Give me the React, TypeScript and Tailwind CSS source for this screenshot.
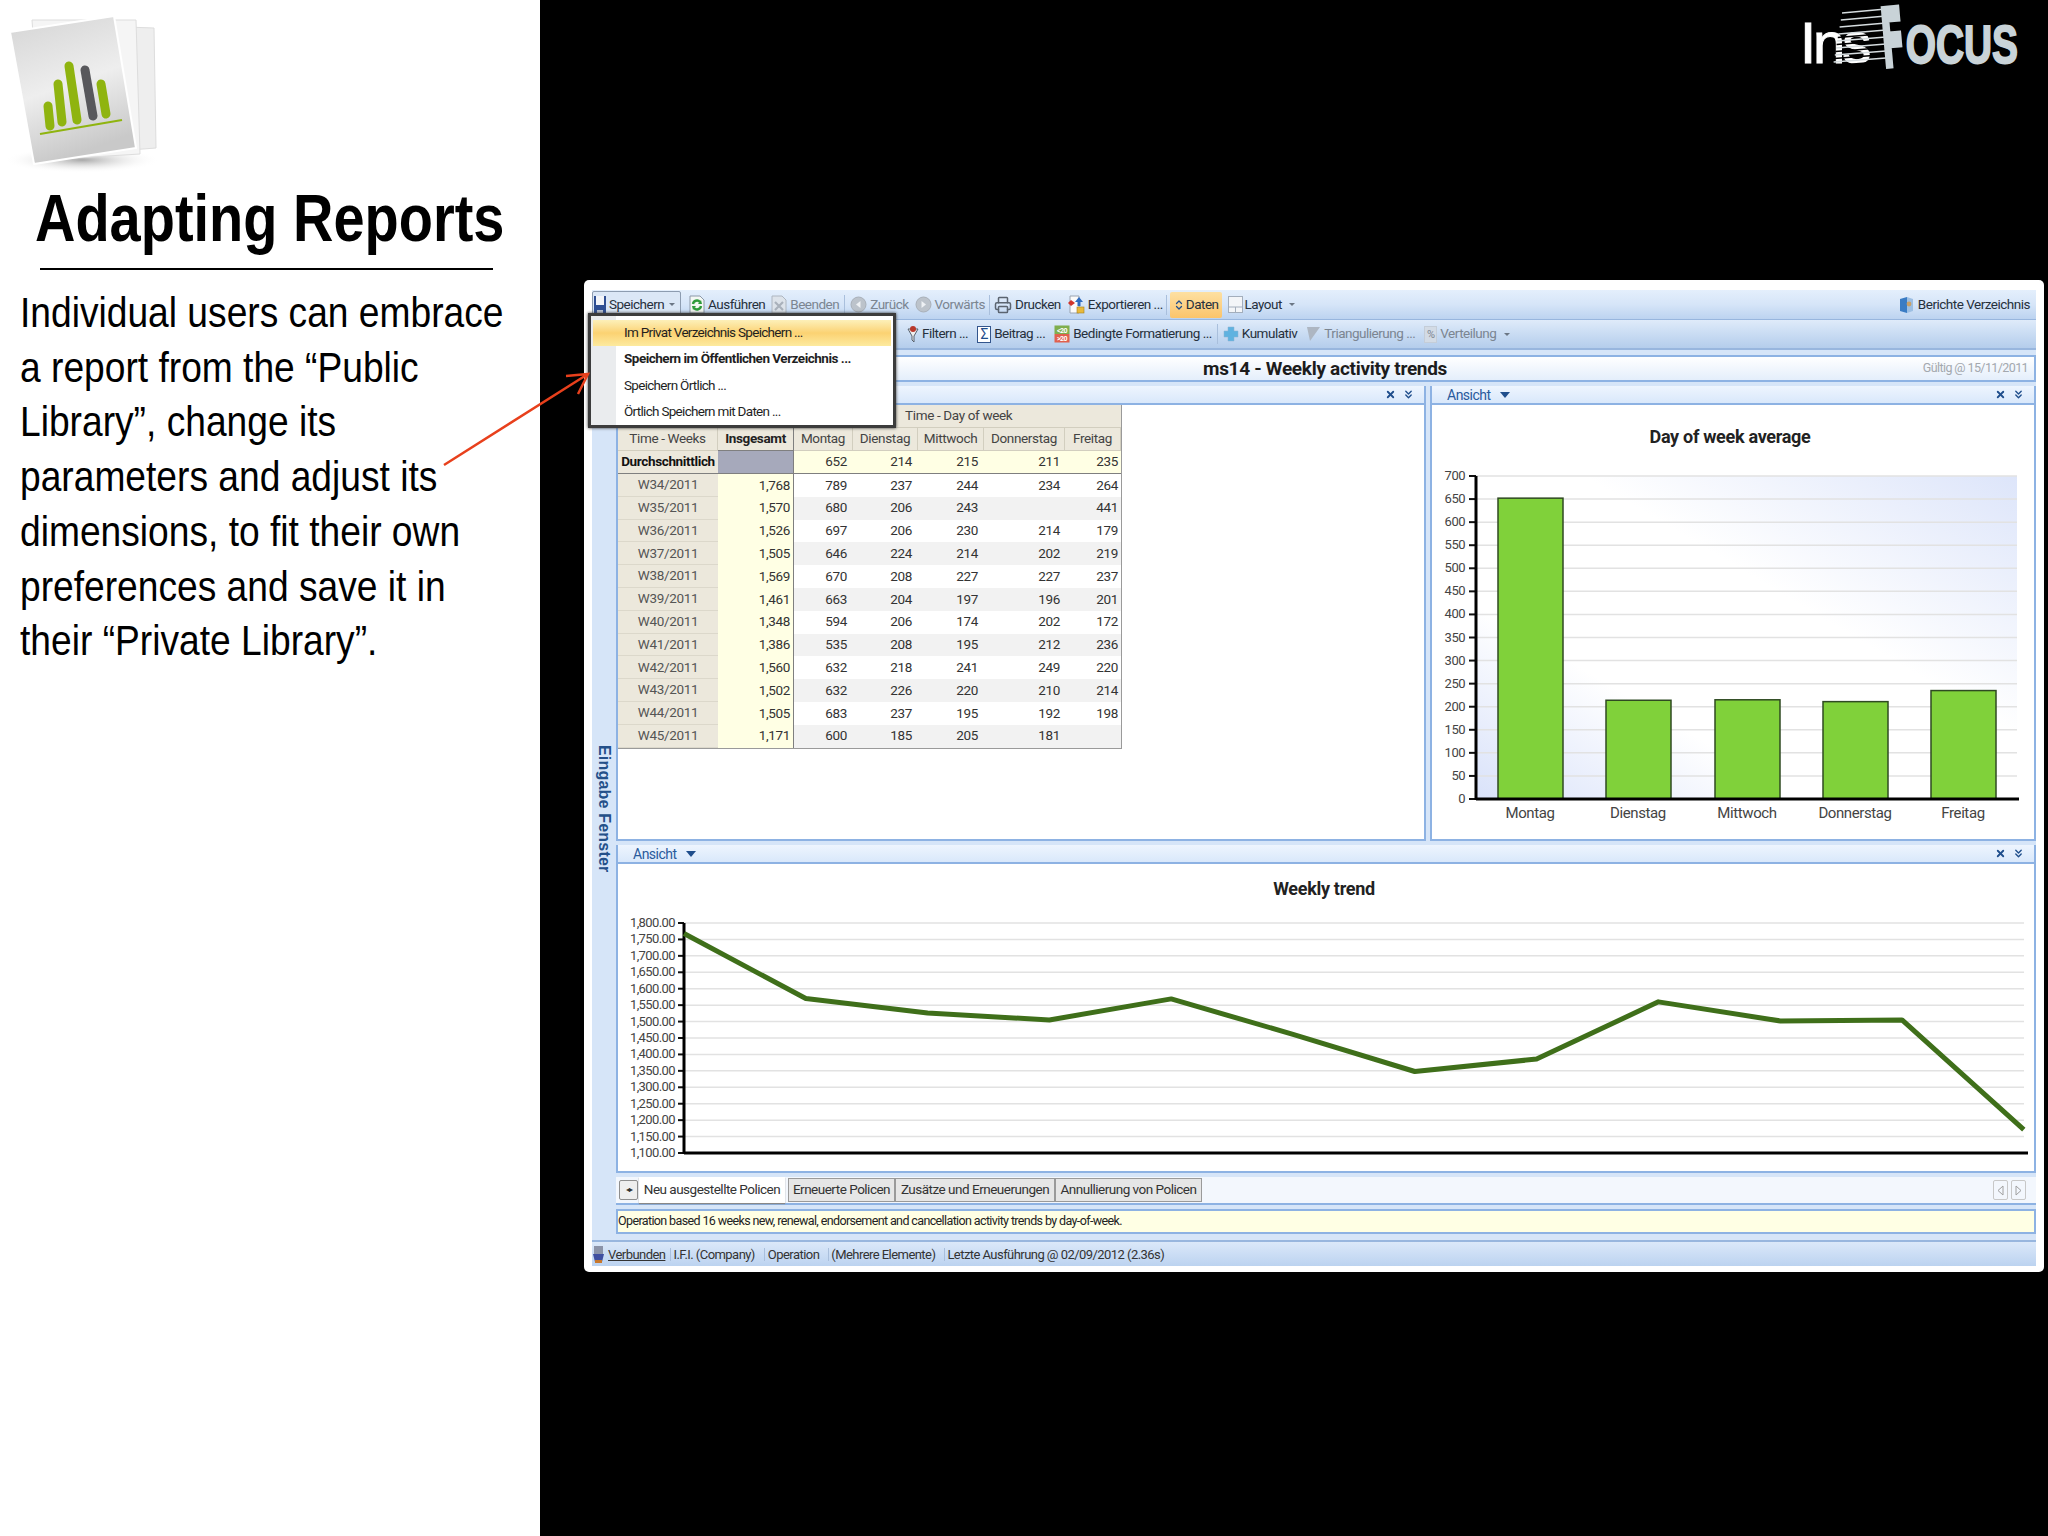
import { ChevronsDown, ChevronsUpDown, Printer, X } from 'lucide-react';
import type { ReactNode } from 'react';

const UI_FONT = "font-['Roboto',sans-serif]";
const SLIDE_FONT = "font-['Liberation_Sans',sans-serif]";

const rows = [
  ['W34/2011', '1,768', '789', '237', '244', '234', '264'],
  ['W35/2011', '1,570', '680', '206', '243', '', '441'],
  ['W36/2011', '1,526', '697', '206', '230', '214', '179'],
  ['W37/2011', '1,505', '646', '224', '214', '202', '219'],
  ['W38/2011', '1,569', '670', '208', '227', '227', '237'],
  ['W39/2011', '1,461', '663', '204', '197', '196', '201'],
  ['W40/2011', '1,348', '594', '206', '174', '202', '172'],
  ['W41/2011', '1,386', '535', '208', '195', '212', '236'],
  ['W42/2011', '1,560', '632', '218', '241', '249', '220'],
  ['W43/2011', '1,502', '632', '226', '220', '210', '214'],
  ['W44/2011', '1,505', '683', '237', '195', '192', '198'],
  ['W45/2011', '1,171', '600', '185', '205', '181', ''],
];

const bodyLines = [
  'Individual users can embrace',
  'a report from the “Public',
  'Library”, change its',
  'parameters and adjust its',
  'dimensions, to fit their own',
  'preferences and save it in',
  'their “Private Library”.',
];

const days = [
  { name: 'Montag', value: 652 },
  { name: 'Dienstag', value: 214 },
  { name: 'Mittwoch', value: 215 },
  { name: 'Donnerstag', value: 211 },
  { name: 'Freitag', value: 235 },
];

const weekly = [1768, 1570, 1526, 1505, 1569, 1461, 1348, 1386, 1560, 1502, 1505, 1171];

function ReportsIcon() {
  return (
    <svg width="160" height="172" viewBox="0 0 160 172" className="shrink-0">
      <defs>
        <linearGradient id="page" x1="0" y1="0" x2="0.3" y2="1">
          <stop offset="0" stopColor="#d4d4d4" />
          <stop offset="0.55" stopColor="#eeeeee" />
          <stop offset="1" stopColor="#c9c9c9" />
        </linearGradient>
        <radialGradient id="shade">
          <stop offset="0" stopColor="#a8a8a8" />
          <stop offset="1" stopColor="#ffffff" stopOpacity="0" />
        </radialGradient>
      </defs>
      <ellipse cx="80" cy="156" rx="78" ry="13" fill="url(#shade)" />
      <polygon points="40,20 152,24 154,144 50,152" fill="#eeeeee" stroke="#dddddd" />
      <polygon points="30,16 134,16 138,150 40,156" fill="#f5f5f5" stroke="#dddddd" />
      <polygon points="8,28 112,12 134,144 32,160" fill="url(#page)" stroke="#ffffff" strokeWidth="2" />
      <g strokeLinecap="round" strokeWidth="9" fill="none">
        <path d="M46 102 L48 122" stroke="#8fb40f" />
        <path d="M56 80 L60 118" stroke="#8fb40f" />
        <path d="M67 62 L75 116" stroke="#8fb40f" />
        <path d="M83 66 L91 112" stroke="#58585c" />
        <path d="M99 80 L104 110" stroke="#8fb40f" />
      </g>
      <path d="M38 130 L120 116" stroke="#8fb40f" strokeWidth="2" />
    </svg>
  );
}

function Logo() {
  return (
    <div className="relative mt-[5px] mr-[30px] h-[66px] w-[216px]">
      <span className={`${SLIDE_FONT} absolute top-[9px] left-[-2px] text-[58px] leading-[58px] tracking-[-3px] text-white [-webkit-text-stroke:1px_#ffffff]`}>
        Ins
      </span>
      <svg width="62" height="60" viewBox="0 0 62 60" className="absolute top-[3px] left-[22px]">
        {Array.from({ length: 16 }).map((_, i) => (
          <path key={i} d={`M${18 - i * 0.6} ${5 + i * 3.5} L62 ${1 + i * 3.5}`} stroke={i % 2 ? '#000000' : '#d5dcdf'} strokeWidth="1.7" />
        ))}
      </svg>
      <span className={`${SLIDE_FONT} absolute top-0 left-[81px] origin-left rotate-[-5deg] scale-x-[.38] text-[80px] leading-[66px] font-bold text-[#c9d3d8] [-webkit-text-stroke:8px_#c9d3d8]`}>
        F
      </span>
      <span className={`${SLIDE_FONT} absolute top-[12px] right-0 origin-right scale-x-[.72] text-[54px] leading-[54px] font-bold text-[#c9d3d8] [-webkit-text-stroke:2px_#c9d3d8]`}>
        OCUS
      </span>
    </div>
  );
}

function RunIcon() {
  return (
    <svg width="16" height="19" viewBox="0 0 16 19" className="shrink-0">
      <path d="M1 1 H11 L15 5 V18 H1 Z" fill="#f4f8f4" stroke="#8c98a8" />
      <path d="M4 9 A4 4 0 0 1 11 7 M12 11 A4 4 0 0 1 5 13" fill="none" stroke="#2f9a3a" strokeWidth="2.4" />
      <path d="M9 9 L13 9 L12 5 Z M7 11 L3 11 L4 15 Z" fill="#2f9a3a" />
    </svg>
  );
}

function StopIcon() {
  return (
    <svg width="16" height="19" viewBox="0 0 16 19" className="shrink-0">
      <path d="M1 1 H11 L15 5 V18 H1 Z" fill="#dde3ea" stroke="#aeb6c0" />
      <path d="M4 7 L12 15 M12 7 L4 15" stroke="#a9b1bb" strokeWidth="2.2" />
    </svg>
  );
}

function RoundIcon({ back }: { back?: boolean }) {
  return (
    <svg width="17" height="17" viewBox="0 0 17 17" className="shrink-0">
      <circle cx="8.5" cy="8.5" r="7.5" fill="#bcc3cb" stroke="#a9b0b9" />
      <path d={back ? 'M10.5 5 L6 8.5 L10.5 12 Z' : 'M6.5 5 L11 8.5 L6.5 12 Z'} fill="#eef1f4" />
    </svg>
  );
}

function ExportIcon() {
  return (
    <svg width="18" height="19" viewBox="0 0 18 19" className="shrink-0">
      <path d="M3 1 H12 V18 H3 Z" fill="#fbfbfb" stroke="#9aa4b2" />
      <path d="M4 5 L8 8 L4 11 L1 8 Z" fill="#d0352c" />
      <path d="M12 2 L16 7 H13.5 V11 H10.5 V7 H8 Z" fill="#2f6cc0" />
      <rect x="10" y="12" width="7" height="6" fill="#e8b93a" stroke="#a37f1f" strokeWidth="0.6" />
    </svg>
  );
}

function ToolItem({ icon, label, dim }: { icon?: ReactNode; label: string; dim?: boolean }) {
  return (
    <div className="flex shrink-0 items-center gap-[3px]">
      {icon}
      <span className={dim ? 'text-[#7b8591]' : 'text-[#26303c]'}>{label}</span>
    </div>
  );
}

function Caret() {
  return <span className="ml-[5px] h-0 w-0 border-x-[3px] border-t-[3px] border-x-transparent border-t-[#6b7684]" />;
}

function Sep({ className = '' }: { className?: string }) {
  return <span className={`h-[20px] w-px shrink-0 bg-[#a9bfdc] ${className}`} />;
}

function PanelHeader({ title }: { title?: string }) {
  return (
    <div className="flex h-[19px] shrink-0 items-center border-b-2 border-[#8db2e3] bg-linear-to-b from-[#eef5fe] to-[#d9e8fb] pr-[9px] pl-[15px] text-[14px] text-[#2a5a9c]">
      {title && (
        <>
          <span>{title}</span>
          <span className="ml-[9px] h-0 w-0 border-x-[5px] border-t-[6px] border-x-transparent border-t-[#1f4e8c]" />
        </>
      )}
      <div className="ml-auto flex items-center gap-[6px] text-[#1f4e8c]">
        <X size={11} strokeWidth={4} />
        <ChevronsDown size={13} strokeWidth={2.5} />
      </div>
    </div>
  );
}

function SaveMenu() {
  return (
    <div className={`${UI_FONT} absolute top-[313px] left-[588px] z-10 h-[115px] w-[308px] border-[3px] border-[#3c3c3c] bg-white pt-[4px] text-[13.5px] leading-none tracking-[-0.7px] whitespace-nowrap text-[#1f1f1f] shadow-[0_0_3px_#333]`}>
      <div className="absolute inset-y-0 left-0 w-[25px] bg-[#eaecee]" />
      <div className="relative flex flex-col">
        <div className="mx-[2px] flex h-[26px] items-center bg-linear-to-b from-[#fdf0b8] via-[#fbd272] to-[#fdea9e] pl-[31px]">Im Privat Verzeichnis Speichern ...</div>
        <div className="flex h-[26px] items-center pl-[33px] font-bold tracking-[-0.5px]">Speichern im Öffentlichen Verzeichnis ...</div>
        <div className="flex h-[27px] items-center pl-[33px]">Speichern Örtlich ...</div>
        <div className="flex h-[26px] items-center pl-[33px]">Örtlich Speichern mit Daten ...</div>
      </div>
    </div>
  );
}

function DataTable() {
  const head = 'border-r border-b border-[#d2cebf] bg-[#ece8dc] font-normal text-[#444444]';
  return (
    <table className="w-[503px] table-fixed border-separate border-spacing-0 border-r border-b border-[#9a9a9a] text-[13.5px] leading-none tracking-[-0.35px]">
      <colgroup>
        <col className="w-[100px]" />
        <col className="w-[76px]" />
        <col className="w-[59px]" />
        <col className="w-[65px]" />
        <col className="w-[66px]" />
        <col className="w-[81px]" />
        <col className="w-[56px]" />
      </colgroup>
      <thead>
        <tr className="h-[23px]">
          <th colSpan={2} className="bg-[#ece8dc]" />
          <th colSpan={5} className="border-b border-[#d2cebf] bg-[#ece8dc] pl-[111px] text-left font-normal text-[#444444]">
            Time - Day of week
          </th>
        </tr>
        <tr className="h-[23px]">
          <th className={head}>Time - Weeks</th>
          <th className="border-r border-b border-[#7f7f7f] bg-[#ece8dc] font-bold text-[#222222]">Insgesamt</th>
          <th className={head}>Montag</th>
          <th className={head}>Dienstag</th>
          <th className={head}>Mittwoch</th>
          <th className={head}>Donnerstag</th>
          <th className={head}>Freitag</th>
        </tr>
      </thead>
      <tbody className="text-right text-[#333333]">
        <tr className="h-[23px] bg-[#ffffe4]">
          <td className="border-b border-[#7f7f7f] bg-[#ece8dc] text-center font-bold whitespace-nowrap text-[#111111]">Durchschnittlich</td>
          <td className="border-r border-b border-[#7f7f7f] bg-[#a6a9bb]" />
          {['652', '214', '215', '211', '235'].map((v, i) => (
            <td key={i} className={`border-b border-[#7f7f7f] ${i === 4 ? 'pr-[3px]' : i === 3 ? 'pr-[5px]' : 'pr-[6px]'}`}>{v}</td>
          ))}
        </tr>
        {rows.map((r, i) => (
          <tr key={r[0]} className={`h-[22.8px] ${i % 2 ? 'bg-[#f2f2f2]' : 'bg-white'}`}>
            <td className="border-b border-[#dcd8cb] bg-[#ece8dc] text-center text-[#555555]">{r[0]}</td>
            <td className="border-r border-[#7f7f7f] bg-[#ffffe4] pr-[3px]">{r[1]}</td>
            {r.slice(2).map((v, j) => (
              <td key={j} className={j === 4 ? 'pr-[3px]' : j === 3 ? 'pr-[5px]' : 'pr-[6px]'}>{v}</td>
            ))}
          </tr>
        ))}
      </tbody>
    </table>
  );
}

function BarChart() {
  const top = 71;
  const base = 394;
  const axis = 44;
  const step = (base - top) / 14;
  const labels = Array.from({ length: 15 }).map((_, i) => i * 50);
  const xs = [66, 174, 283, 391, 499];
  return (
    <svg viewBox="0 0 602 434" className="h-full w-full">
      <defs>
        <linearGradient id="plot" x1="0" y1="1" x2="1" y2="0">
          <stop offset="0" stopColor="#d9e2fa" />
          <stop offset="0.3" stopColor="#ffffff" />
          <stop offset="0.6" stopColor="#ffffff" />
          <stop offset="1" stopColor="#dde5fa" />
        </linearGradient>
      </defs>
      <text x="298" y="38" textAnchor="middle" fill="#222222" className="text-[18px] font-bold tracking-[-0.3px]">
        Day of week average
      </text>
      <rect x={axis} y={top} width={585 - axis} height={base - top} fill="url(#plot)" />
      {labels.map((v, i) => {
        const y = base - i * step;
        return (
          <g key={v}>
            <line x1={axis} x2="585" y1={y} y2={y} stroke="#e2e2e2" strokeWidth="1.5" />
            <line x1={axis - 7} x2={axis} y1={y} y2={y} stroke="#111111" strokeWidth="2" />
            <text x={axis - 11} y={y + 4} textAnchor="end" fill="#444444" className="text-[13px] tracking-[-0.5px]">
              {v}
            </text>
          </g>
        );
      })}
      {days.map((d, i) => {
        const h = (d.value / 700) * (base - top);
        return (
          <g key={d.name}>
            <rect x={xs[i]} y={base - h} width="65" height={h} fill="#80d13a" stroke="#2f4a22" strokeWidth="1.5" />
            <text x={xs[i] + 32} y={base + 19} textAnchor="middle" fill="#444444" className="text-[15px] tracking-[-0.4px]">
              {d.name}
            </text>
          </g>
        );
      })}
      <line x1={axis} x2={axis} y1={top} y2={base + 1} stroke="#000000" strokeWidth="3" />
      <line x1={axis} x2="587" y1={base} y2={base} stroke="#000000" strokeWidth="3" />
    </svg>
  );
}

function LineChart() {
  const top = 59;
  const base = 289;
  const axis = 66;
  const step = (base - top) / 14;
  const labels = Array.from({ length: 15 }).map((_, i) => 1100 + i * 50);
  const points = weekly.map((v, i) => `${66 + i * 121.8},${base - ((v - 1100) / 700) * (base - top)}`).join(' ');
  return (
    <svg viewBox="0 0 1416 307" className="h-full w-full">
      <text x="706" y="31" textAnchor="middle" fill="#222222" className="text-[18px] font-bold tracking-[-0.3px]">
        Weekly trend
      </text>
      {labels.map((v, i) => {
        const y = base - i * step;
        return (
          <g key={v}>
            <line x1={axis} x2="1406" y1={y} y2={y} stroke="#e2e2e2" strokeWidth="1.5" />
            <line x1={axis - 6} x2={axis} y1={y} y2={y} stroke="#111111" strokeWidth="2" />
            <text x={axis - 9} y={y + 4} textAnchor="end" fill="#444444" className="text-[13px] tracking-[-0.6px]">
              {v.toLocaleString('en-US')}.00
            </text>
          </g>
        );
      })}
      <line x1={axis} x2={axis} y1={top} y2={base + 1} stroke="#000000" strokeWidth="3" />
      <line x1={axis} x2="1410" y1={base} y2={base} stroke="#000000" strokeWidth="3" />
      <polyline points={points} fill="none" stroke="#3f6f1a" strokeWidth="5" strokeLinejoin="round" />
    </svg>
  );
}

function ReportWindow() {
  return (
    <div className={`${UI_FONT} ml-[44px] flex h-[992px] w-[1460px] flex-col rounded-[5px] bg-white px-[8px] pt-[10px] pb-[6px] text-[13.5px] leading-none tracking-[-0.5px] whitespace-nowrap`}>
      {/* first toolbar */}
      <div className="flex h-[30px] shrink-0 items-center border-b border-[#98b6de] bg-linear-to-b from-[#e4effc] via-[#d6e5f8] to-[#bcd3f0] pr-[6px]">
        <div className="flex h-[28px] w-[89px] shrink-0 items-center rounded-t-[2px] border border-[#8d9cb0] bg-[#dbe7f6] text-[#26303c]">
          <svg width="14" height="26" viewBox="0 0 14 26" className="mr-[2px] shrink-0">
            <rect x="1" y="4" width="12" height="20" fill="#2f4f93" />
            <rect x="3" y="4" width="8" height="9" fill="#f3f5f9" />
            <rect x="4" y="18" width="6" height="6" fill="#b8c2d4" />
          </svg>
          Speichern
          <Caret />
        </div>
        <div className="ml-[8px] flex items-center gap-[6px]">
          <ToolItem icon={<RunIcon />} label="Ausführen" />
          <ToolItem dim icon={<StopIcon />} label="Beenden" />
          <Sep className="-mx-[1px]" />
          <ToolItem dim icon={<RoundIcon back />} label="Zurück" />
          <ToolItem dim icon={<RoundIcon />} label="Vorwärts" />
          <Sep className="-mx-[2px]" />
          <ToolItem icon={<Printer size={18} className="text-[#5b6470]" />} label="Drucken" />
          <ToolItem icon={<ExportIcon />} label="Exportieren ..." />
          <Sep className="-mx-[3px]" />
          <div className="flex h-[26px] shrink-0 items-center gap-[1px] rounded-[2px] bg-linear-to-b from-[#fde0a2] to-[#fbc46a] px-[3px] text-[#26303c]">
            <ChevronsUpDown size={12} strokeWidth={2.5} className="text-[#1f4e8c]" />
            Daten
          </div>
          <div className="flex shrink-0 items-center gap-[2px] text-[#26303c]">
            <svg width="15" height="17" viewBox="0 0 15 17" className="shrink-0">
              <rect x="0.5" y="0.5" width="14" height="16" fill="#f3f5f8" stroke="#a3aebc" />
              <path d="M0.5 11 H14.5 M7.5 11 V16.5" stroke="#a3aebc" />
            </svg>
            Layout
            <Caret />
          </div>
        </div>
        <div className="ml-auto flex items-center gap-[3px] text-[#26303c]">
          <svg width="17" height="18" viewBox="0 0 17 18">
            <path d="M2 3 L9 1 V17 L2 15 Z" fill="#3a7cc4" />
            <path d="M9 1 L15 3 V15 L9 17 Z" fill="#9dbfe3" />
            <circle cx="11" cy="8" r="2.4" fill="#c9a066" />
          </svg>
          Berichte Verzeichnis
        </div>
      </div>
      {/* second toolbar, starts behind the save menu */}
      <div className="flex h-[30px] shrink-0 items-center gap-[9px] border-b-2 border-[#98b6de] bg-linear-to-b from-[#dfebfa] to-[#b4cdec] pl-[315px]">
        <ToolItem
          icon={
            <svg width="12" height="18" viewBox="0 0 12 18">
              <path d="M1 4 H11 L7 11 V17 L5 15 V11 Z" fill="#f0f0f0" stroke="#57606c" />
              <circle cx="6" cy="4" r="3" fill="#b8382c" />
            </svg>
          }
          label="Filtern ..."
        />
        <ToolItem
          icon={<span className="flex h-[17px] w-[14px] items-center justify-center border border-[#33558c] bg-white text-[14px] text-[#1f4e8c]">Σ</span>}
          label="Beitrag ..."
        />
        <ToolItem
          icon={
            <svg width="16" height="18" viewBox="0 0 16 18">
              <rect x="0.5" y="0.5" width="15" height="8.5" fill="#7fae4e" />
              <rect x="0.5" y="9" width="15" height="8.5" fill="#e0604e" />
              <text x="8" y="7.5" textAnchor="middle" fill="#ffffff" className="text-[7px] font-bold">&lt;20</text>
              <text x="8" y="16" textAnchor="middle" fill="#ffffff" className="text-[7px] font-bold">&gt;20</text>
            </svg>
          }
          label="Bedingte Formatierung ..."
        />
        <Sep className="-mx-[4px]" />
        <ToolItem
          icon={
            <svg width="16" height="18" viewBox="0 0 16 18">
              <path d="M5 2 H11 V6 H15 V12 H11 V16 H5 V12 H1 V6 H5 Z" fill="#5fb2e0" stroke="#8fb2d0" strokeWidth="0.5" />
            </svg>
          }
          label="Kumulativ"
        />
        <ToolItem
          dim
          icon={
            <svg width="15" height="16" viewBox="0 0 15 16">
              <path d="M1 1 H14 L4 15 Z" fill="#adb6c2" />
            </svg>
          }
          label="Triangulierung ..."
        />
        <div className="flex shrink-0 items-center gap-[3px] text-[#7b8591]">
          <span className="flex h-[17px] w-[13px] items-center justify-center border border-[#c4cdd8] bg-[#d3dbe5] text-[11px]">%</span>
          Verteilung
          <Caret />
        </div>
      </div>
      <div className="flex min-h-0 flex-1 bg-[#d6e5f8] pt-[5px]">
        {/* collapsed input panel */}
        <div className="flex w-[24px] shrink-0 items-center justify-center pt-[22px]">
          <span className={`${SLIDE_FONT} text-[16px] font-bold tracking-[0.2px] text-[#245089] [writing-mode:vertical-rl]`}>Eingabe Fenster</span>
        </div>
        <div className="flex min-w-0 flex-1 flex-col gap-[4px]">
          <div className="flex h-[27px] shrink-0 items-center border-2 border-[#8db2e3] bg-linear-to-b from-[#ffffff] to-[#e4eefb] px-[6px]">
            <span className="ml-[579px] text-[19px] font-bold tracking-[-0.3px] text-[#1c1c1c]">ms14 - Weekly activity trends</span>
            <span className="ml-auto text-[12.5px] tracking-[-0.6px] text-[#a3a8ae]">Gültig @ 15/11/2011</span>
          </div>
          <div className="flex h-[455px] shrink-0 gap-[4px]">
            <div className="flex w-[810px] flex-col border-2 border-t-0 border-[#8db2e3] bg-white">
              <PanelHeader />
              <DataTable />
            </div>
            <div className="flex min-w-0 flex-1 flex-col border-2 border-t-0 border-[#8db2e3] bg-white">
              <PanelHeader title="Ansicht" />
              <div className="min-h-0 flex-1">
                <BarChart />
              </div>
            </div>
          </div>
          <div className="flex h-[328px] shrink-0 flex-col border-2 border-t-0 border-[#8db2e3] bg-white">
            <PanelHeader title="Ansicht" />
            <div className="min-h-0 flex-1">
              <LineChart />
            </div>
          </div>
          <div className="flex h-[28px] shrink-0 items-center border-b-2 border-[#8db2e3] bg-[#f3f7fd] pl-[3px] text-[13.5px] tracking-[-0.5px] text-[#333333]">
            <span className="mr-[1px] flex h-[20px] w-[19px] items-center justify-center rounded-[2px] border border-[#8e8e8e] bg-[#eeeeee] text-[8px] tracking-[-1px]">◂▸</span>
            <span className="flex h-[26px] w-[146px] items-center justify-center bg-white shadow-[0_1px_1px_#888]">Neu ausgestellte Policen</span>
            <span className="ml-[3px] flex h-[24px] w-[107px] items-center justify-center border border-[#9a9a9a] bg-[#e6e6e6]">Erneuerte Policen</span>
            <span className="flex h-[24px] w-[160px] items-center justify-center border border-[#9a9a9a] bg-[#e6e6e6]">Zusätze und Erneuerungen</span>
            <span className="flex h-[24px] w-[147px] items-center justify-center border border-[#9a9a9a] bg-[#e6e6e6]">Annullierung von Policen</span>
            <div className="ml-auto flex gap-[3px] pr-[10px]">
              <span className="flex h-[20px] w-[15px] items-center justify-center rounded-[2px] border border-[#c8c8c8]">
                <svg width="7" height="11" viewBox="0 0 7 11"><path d="M6 1 L1 5.5 L6 10 Z" fill="none" stroke="#a0a0a0" /></svg>
              </span>
              <span className="flex h-[20px] w-[15px] items-center justify-center rounded-[2px] border border-[#c8c8c8]">
                <svg width="7" height="11" viewBox="0 0 7 11"><path d="M1 1 L6 5.5 L1 10 Z" fill="none" stroke="#a0a0a0" /></svg>
              </span>
            </div>
          </div>
          <div className="flex h-[25px] shrink-0 items-center border-2 border-[#8db2e3] bg-[#ffffe4] text-[12.5px] tracking-[-0.62px] text-[#222222]">
            Operation based 16 weeks new, renewal, endorsement and cancellation activity trends by day-of-week.
          </div>
        </div>
      </div>
      {/* status bar */}
      <div className="flex h-[26px] shrink-0 items-center border-t-2 border-[#98b6de] bg-linear-to-b from-[#dbe8f9] to-[#bcd3f0] text-[13px] tracking-[-0.55px] text-[#333333]">
        <svg width="13" height="20" viewBox="0 0 13 20" className="mr-[3px] shrink-0">
          <rect x="2" y="2" width="9" height="8" fill="#8b93a8" />
          <path d="M1 10 H12 L10 18 H3 Z" fill="#3f4fa0" />
          <rect x="3" y="16" width="7" height="3" fill="#c8782c" />
        </svg>
        <span className="underline">Verbunden</span>
        <span className="ml-[5px] border-l border-[#a9bfdc] pl-[2px]">I.F.I. (Company)</span>
        <span className="ml-[9px] border-l border-[#a9bfdc] pl-[3px]">Operation</span>
        <span className="ml-[9px] border-l border-[#a9bfdc] pl-[2px]">(Mehrere Elemente)</span>
        <span className="ml-[9px] border-l border-[#a9bfdc] pl-[2px]">Letzte Ausführung @ 02/09/2012 (2.36s)</span>
      </div>
    </div>
  );
}

export default function App() {
  return (
    <div className="relative flex h-[1536px] w-[2048px] overflow-hidden bg-black">
      <aside className={`${SLIDE_FONT} flex w-[540px] shrink-0 flex-col bg-white text-black`}>
        <div className="pt-[4px] pl-[2px]">
          <ReportsIcon />
        </div>
        <h1 className="mt-[6px] ml-[35px] origin-left scale-x-[.848] text-[66px] leading-[72px] font-bold whitespace-nowrap">
          Adapting Reports
        </h1>
        <div className="mt-[14px] ml-[40px] h-[2px] w-[453px] bg-black" />
        <div className="mt-[16px] ml-[20px] origin-left scale-x-[.885] text-[42px] leading-[54.7px] whitespace-nowrap">
          {bodyLines.map((line) => (
            <div key={line}>{line}</div>
          ))}
        </div>
      </aside>
      <main className="flex min-w-0 flex-1 flex-col">
        <div className="flex h-[280px] shrink-0 justify-end">
          <Logo />
        </div>
        <ReportWindow />
      </main>
      <SaveMenu />
      {/* callout arrow from the text to the menu */}
      <svg width="2048" height="1536" viewBox="0 0 2048 1536" className="pointer-events-none absolute inset-0 z-20">
        <path d="M444 465 L588 374 M566 376 L588 374 L578 394" fill="none" stroke="#e8401c" strokeWidth="2.5" />
      </svg>
    </div>
  );
}
